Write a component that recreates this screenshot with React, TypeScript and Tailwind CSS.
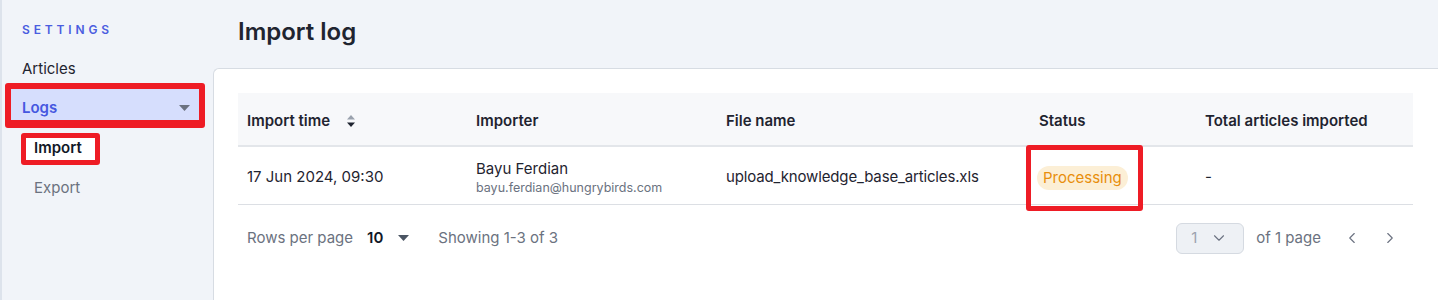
import React from 'react';
import { ChevronDown, ChevronLeft, ChevronRight } from 'lucide-react';

const Caret = ({ className = '' }: { className?: string }) => (
  <svg width="11" height="6" viewBox="0 0 11 6" className={className}>
    <path d="M0 0h11L5.5 6z" fill="currentColor" />
  </svg>
);

const SortIcon = () => (
  <svg width="10" height="14" viewBox="0 0 10 14" className="ml-[16px]">
    <path d="M1 5.5h8L5 1z" fill="#9aa1ad" />
    <path d="M1 8.5h8L5 13z" fill="#1f2430" />
  </svg>
);

const Sidebar = () => (
  <aside className="w-[213px] shrink-0 border-l-2 border-[#dde3ec] bg-[#f1f4f9] pt-[21px]">
    <div className="pl-[20px] text-[12px] font-semibold tracking-[0.32em] text-[#4a5de0]">SETTINGS</div>
    <div className="mt-[19px] pl-[20px] text-[15px] text-[#1f2430]">Articles</div>
    <div className="ml-[3px] mt-[2px] w-[200px] rounded-[3px] border-[6px] border-b-[8px] border-[#ee1c25]">
      <div className="flex h-[31px] items-center justify-between bg-[#d6defd] pl-[11px] pr-[9px] pt-[8px]">
        <span className="text-[15px] font-semibold text-[#4557e0]">Logs</span>
        <Caret className="text-[#6b7280]" />
      </div>
    </div>
    <div className="ml-[19px] mt-[5px] w-[79px] rounded-[3px] border-[5px] border-[#ee1c25] bg-white">
      <div className="flex h-[22px] items-center pl-[8px] text-[15px] font-semibold text-[#111827]">Import</div>
    </div>
    <div className="mt-[12px] pl-[32px] text-[15px] text-[#6b7280]">Export</div>
  </aside>
);

const cols = ['w-[229px]', 'w-[250px]', 'w-[313px]', 'w-[166px]', 'flex-1'];

const Table = () => (
  <div className="w-[1175px]">
    <div className="flex h-[54px] items-center border-b-2 border-[#e3e6ea] bg-[#f7f8fa] pt-[4px] text-[15px] font-semibold text-[#1f2430]">
      <div className={`${cols[0]} flex items-center pl-[9px]`}>
        Import time <SortIcon />
      </div>
      <div className={`${cols[1]} pl-[9px]`}>Importer</div>
      <div className={`${cols[2]} pl-[9px]`}>File name</div>
      <div className={`${cols[3]} pl-[9px]`}>Status</div>
      <div className={`${cols[4]} pl-[9px]`}>Total articles imported</div>
    </div>
    <div className="flex h-[58px] items-center border-b border-[#dcdfe4] pt-[4px] text-[15px] text-[#1f2430]">
      <div className={`${cols[0]} pl-[9px]`}>17 Jun 2024, 09:30</div>
      <div className={`${cols[1]} pl-[9px] leading-[19px]`}>
        <div>Bayu Ferdian</div>
        <div className="text-[12.5px] text-[#6b7280]">bayu.ferdian@hungrybirds.com</div>
      </div>
      <div className={`${cols[2]} pl-[9px] tracking-[-0.01em]`}>upload_knowledge_base_articles.xls</div>
      <div className={`${cols[3]} -ml-[4px] mt-[1px]`}>
        <div className="flex h-[66px] w-[117px] items-center rounded-[3px] border-[5px] border-[#ee1c25] pl-[6px]">
          <span className="rounded-full bg-[#fcefd6] px-[6px] py-[1px] text-[15px] text-[#e88e0c]">Processing</span>
        </div>
      </div>
      <div className={`${cols[4]} pl-[13px]`}>-</div>
    </div>
    <div className="flex h-[64px] items-center pt-[2px] text-[15px] text-[#6b7280]">
      <div className="pl-[9px]">Rows per page</div>
      <div className="ml-[14px] font-semibold text-[#111827]">10</div>
      <Caret className="ml-[15px] text-[#4b5563]" />
      <div className="ml-[29px]">Showing 1-3 of 3</div>
      <div className="ml-auto flex items-center">
        <div className="flex h-[31px] w-[68px] items-center gap-[13px] rounded-[6px] border border-[#d5dae1] bg-[#eef1f5] pl-[14px] text-[#9ca3af]">
          <span>1</span>
          <ChevronDown size={18} strokeWidth={1.5} className="text-[#6b7280]" />
        </div>
        <div className="ml-[12px]">of 1 page</div>
        <ChevronLeft size={18} strokeWidth={1.5} className="ml-[22px] text-[#6b7280]" />
        <ChevronRight size={18} strokeWidth={1.5} className="ml-[20px] mr-[14px] text-[#6b7280]" />
      </div>
    </div>
  </div>
);

export default function App() {
  return (
    <div className="flex h-[300px] w-[1438px] overflow-hidden bg-[#f1f4f9] font-['Inter',sans-serif]">
      <Sidebar />
      <main className="flex flex-1 flex-col">
        <div className="flex h-[68px] items-center pb-[4px] pl-[25px]">
          <h1 className="text-[24px] font-semibold text-[#1f2430]">Import log</h1>
        </div>
        <div className="flex-1 rounded-tl-[6px] border-l border-t border-[#d7dce3] bg-white pl-[24px] pt-[24px]">
          <Table />
        </div>
      </main>
    </div>
  );
}
